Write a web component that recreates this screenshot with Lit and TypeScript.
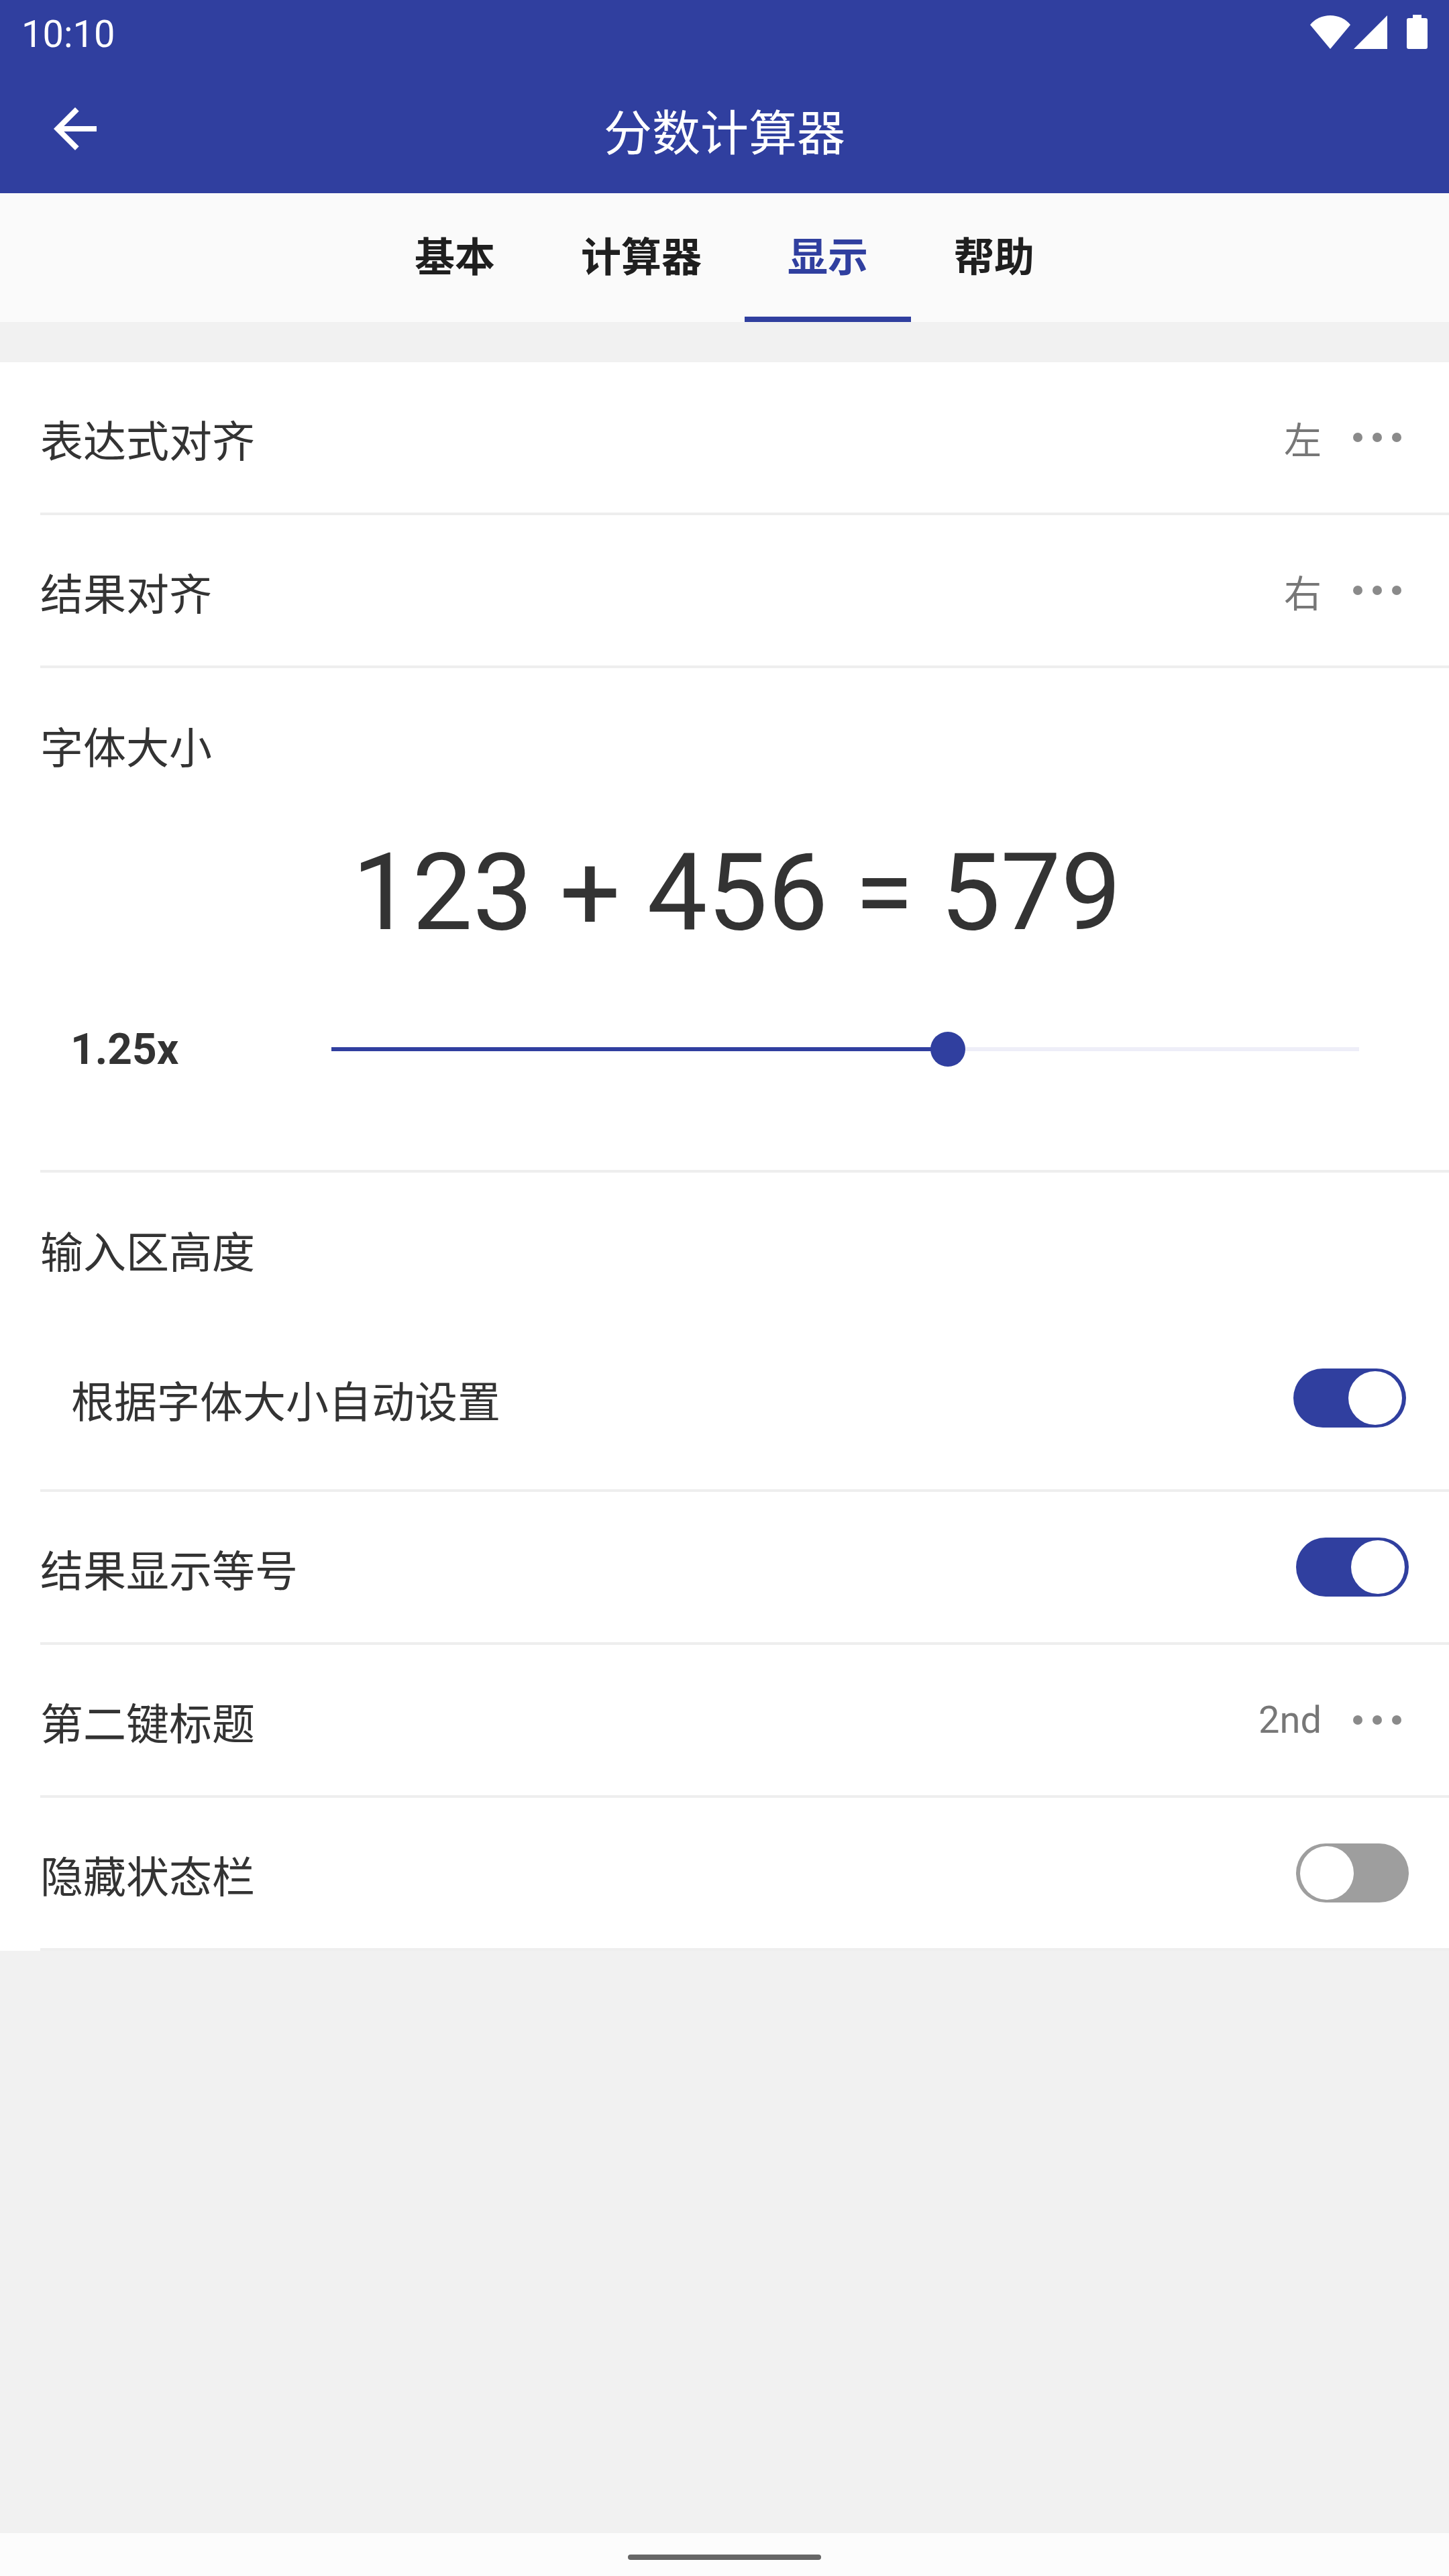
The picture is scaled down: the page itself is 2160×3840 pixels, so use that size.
import { LitElement, html, css } from "lit";
import { customElement, state } from "lit/decorators.js";

const TABS = ["基本", "计算器", "显示", "帮助"];

@customElement("app-root")
export class AppRoot extends LitElement {
  @state() private _tab = 2;
  @state() private _autoHeight = true;
  @state() private _showEquals = true;
  @state() private _hideStatus = false;
  @state() private _fontScale = 0.6;

  static styles = css`
    :host {
      display: flex;
      flex-direction: column;
      height: 3840px;
      background: #f1f1f1;
      font-family: Roboto, "Noto Sans CJK SC", sans-serif;
      color: #333;
    }
    .status {
      height: 96px;
      background: #303f9f;
      color: #fff;
      display: flex;
      align-items: center;
      justify-content: space-between;
      padding: 0 32px;
      font-size: 56px;
      box-sizing: border-box;
    }
    .time {
      padding-top: 6px;
    }
    .status-icons {
      display: flex;
      align-items: flex-start;
      height: 52px;
    }
    .status-icons svg {
      display: block;
      fill: #fff;
    }
    .toolbar {
      height: 192px;
      background: #303f9f;
      color: #fff;
      display: grid;
      grid-template-columns: 1fr auto 1fr;
      align-items: center;
      font-size: 72px;
    }
    .back {
      width: 96px;
      height: 96px;
      margin-left: 64px;
      fill: #fff;
      display: block;
    }
    .tabs {
      height: 192px;
      background: #fafafa;
      display: flex;
      justify-content: center;
    }
    .tab {
      padding: 0 64px 4px;
      font-size: 60px;
      font-weight: 700;
      color: #1f1f1f;
      display: flex;
      align-items: center;
      border-bottom: 8px solid transparent;
      box-sizing: border-box;
      cursor: pointer;
    }
    .tab.active {
      color: #303f9f;
      border-bottom-color: #303f9f;
    }
    .list {
      margin-top: 60px;
      background: #fff;
    }
    .row {
      margin-left: 60px;
      border-bottom: 4px solid #eeeeee;
    }
    .line {
      height: 224px;
      display: flex;
      align-items: center;
      justify-content: space-between;
      box-sizing: border-box;
      padding-right: 60px;
    }
    .label {
      font-size: 64px;
      line-height: 88px;
      padding-top: 15px;
    }
    .value {
      display: flex;
      align-items: center;
      gap: 47px;
      padding-right: 11px;
      font-size: 56px;
      color: #777;
    }
    .dots {
      display: flex;
      gap: 15px;
    }
    .dots span {
      width: 14px;
      height: 14px;
      border-radius: 50%;
      background: #8a8a8a;
    }
    .heading {
      font-size: 64px;
      line-height: 88px;
      padding-top: 77px;
    }
    .font-section {
      height: 752px;
      box-sizing: border-box;
    }
    .sample {
      font-size: 160px;
      line-height: 188px;
      color: #333;
      text-align: center;
      margin-top: 76px;
      padding-right: 24px;
    }
    .slider-row {
      display: flex;
      align-items: center;
      margin-top: 109px;
      height: 60px;
    }
    .scale {
      width: 434px;
      padding-left: 45px;
      box-sizing: border-box;
      font-size: 64px;
      font-weight: 700;
      color: #333;
    }
    .track {
      position: relative;
      width: 1532px;
      height: 6px;
      background: #eeeef8;
    }
    .track-fill {
      height: 100%;
      background: #303f9f;
    }
    .thumb {
      position: absolute;
      top: -23px;
      width: 52px;
      height: 52px;
      margin-left: -26px;
      border-radius: 50%;
      background: #303f9f;
    }
    .sub-line {
      height: 272px;
      margin-top: 35px;
      display: flex;
      align-items: center;
      justify-content: space-between;
      padding: 0 64px 0 46px;
    }
    .toggle {
      width: 168px;
      height: 88px;
      border-radius: 44px;
      background: #9e9e9e;
      padding: 4px 6px;
      box-sizing: border-box;
      display: flex;
      flex-shrink: 0;
      cursor: pointer;
    }
    .toggle.on {
      background: #303f9f;
      justify-content: flex-end;
    }
    .toggle i {
      display: block;
      width: 80px;
      height: 80px;
      border-radius: 50%;
      background: #fff;
    }
    .nav {
      margin-top: auto;
      height: 64px;
      background: #fcfcfc;
      display: flex;
      justify-content: center;
      padding-top: 32px;
      box-sizing: border-box;
    }
    .nav span {
      width: 288px;
      height: 8px;
      border-radius: 4px;
      background: #666;
    }
  `;

  private _toggle(on: boolean, flip: () => void) {
    return html`<div class="toggle ${on ? "on" : ""}" @click=${flip}><i></i></div>`;
  }

  private _valueRow(label: string, value: string) {
    return html`
      <div class="row">
        <div class="line">
          <span class="label">${label}</span>
          <span class="value">
            ${value}
            <span class="dots"><span></span><span></span><span></span></span>
          </span>
        </div>
      </div>
    `;
  }

  private _toggleRow(label: string, on: boolean, flip: () => void) {
    return html`
      <div class="row">
        <div class="line">
          <span class="label">${label}</span>
          ${this._toggle(on, flip)}
        </div>
      </div>
    `;
  }

  render() {
    const pct = this._fontScale * 100;
    return html`
      <div class="status">
        <span class="time">10:10</span>
        <div class="status-icons">
          <svg width="60" height="52" viewBox="0 0 60 52"><path d="M0 15A39 39 0 0 1 60 15L30 51z" /></svg>
          <svg width="50" height="52" viewBox="0 0 50 52" style="margin-left:5px"><path d="M50 1V51H0z" /></svg>
          <svg width="31" height="52" viewBox="0 0 31 52" style="margin-left:29px">
            <path d="M9 0H22V5H28Q31 5 31 8V48Q31 51 28 51H3Q0 51 0 48V8Q0 5 3 5H9z" />
          </svg>
        </div>
      </div>
      <div class="toolbar">
        <svg class="back" viewBox="0 0 24 24">
          <path d="M20 11H7.83l5.59-5.59L12 4l-8 8 8 8 1.41-1.41L7.83 13H20v-2z" />
        </svg>
        <span>分数计算器</span>
      </div>
      <div class="tabs">
        ${TABS.map(
          (t, i) => html`
            <div class="tab ${i === this._tab ? "active" : ""}" @click=${() => (this._tab = i)}>${t}</div>
          `,
        )}
      </div>
      <div class="list">
        ${this._valueRow("表达式对齐", "左")}
        ${this._valueRow("结果对齐", "右")}
        <div class="row font-section">
          <div class="heading">字体大小</div>
          <div class="sample">123 + 456 = 579</div>
          <div class="slider-row">
            <div class="scale">1.25x</div>
            <div class="track">
              <div class="track-fill" style="width:${pct}%"></div>
              <div class="thumb" style="left:${pct}%"></div>
            </div>
          </div>
        </div>
        <div class="row">
          <div class="heading">输入区高度</div>
          <div class="sub-line">
            <span class="label">根据字体大小自动设置</span>
            ${this._toggle(this._autoHeight, () => (this._autoHeight = !this._autoHeight))}
          </div>
        </div>
        ${this._toggleRow("结果显示等号", this._showEquals, () => (this._showEquals = !this._showEquals))}
        ${this._valueRow("第二键标题", "2nd")}
        ${this._toggleRow("隐藏状态栏", this._hideStatus, () => (this._hideStatus = !this._hideStatus))}
      </div>
      <div class="nav"><span></span></div>
    `;
  }
}
